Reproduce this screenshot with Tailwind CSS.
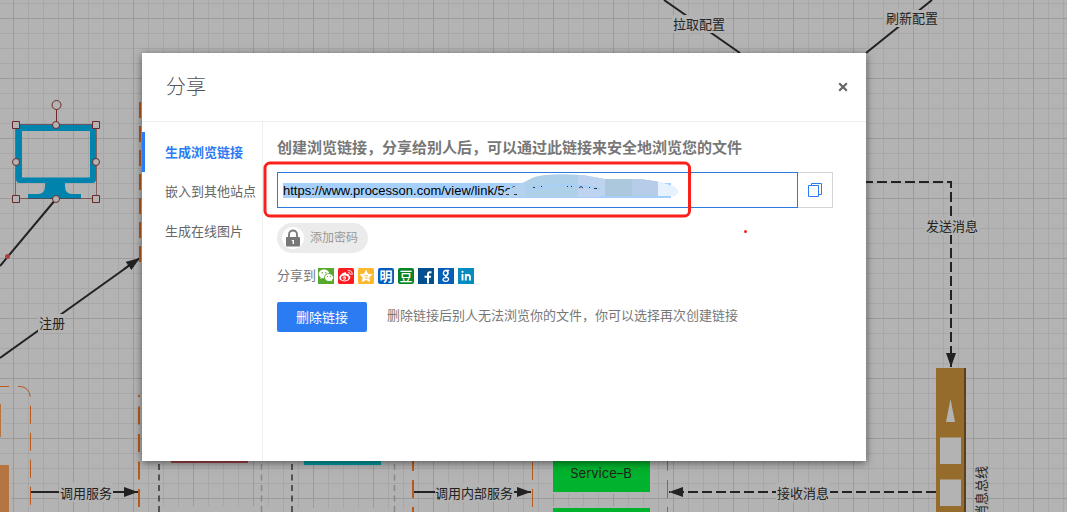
<!DOCTYPE html>
<html lang="zh-CN">
<head>
<meta charset="utf-8">
<meta name="viewport" content="width=device-width, initial-scale=1">
<title>分享</title>
<script src="https://cdn.jsdelivr.net/npm/@tailwindcss/browser@4"></script>
</head>
<body class="font-['Liberation_Sans','Noto_Sans_CJK_SC',sans-serif] text-[13px] text-[#666]">
<main class="relative min-h-screen overflow-hidden bg-[#b3b3b3]">
  <!-- Diagram canvas -->
  <svg class="absolute inset-0 h-full w-full text-[13px]" fill="none" aria-hidden="true">
    <defs>
      <pattern id="grid" x="13" y="18" width="60" height="60" patternUnits="userSpaceOnUse">
        <path d="M15.5 0V60M30.5 0V60M45.5 0V60M0 15.5H60M0 30.5H60M0 45.5H60" stroke="#a7a7a7"/>
        <path d="M.5 0V60M0 .5H60" stroke="#9b9b9b"/>
      </pattern>
      <marker id="arrow" viewBox="0 0 14 10" refX="14" refY="5" markerWidth="14" markerHeight="10" markerUnits="userSpaceOnUse" orient="auto-start-reverse"><path d="M0 0L14 5L0 10Z" fill="#222"/></marker>
    </defs>
    <rect width="100%" height="100%" fill="url(#grid)"/>
    <!-- Cleared interiors of nodes -->
    <g fill="#b3b3b3">
      <rect x="0" y="404" width="3" height="34"/><rect x="0" y="456" width="11" height="60"/>
      <rect x="159" y="506" width="120" height="10"/><rect x="292" y="508" width="120" height="10"/>
      <rect x="551" y="458" width="101" height="36"/><rect x="551" y="506" width="101" height="10"/>
    </g>
    <!-- Connectors -->
    <g stroke="#222" stroke-width="2">
      <path d="M664 0L740 53M932 0L866 53M56 199L0 266M0 358L130 265" />
      <path d="M124 269L140 258" marker-end="url(#arrow)"/>
      <path d="M31 492H138" marker-end="url(#arrow)"/>
      <path d="M414 492H531" marker-end="url(#arrow)"/>
      <path d="M866 182H951V367" stroke-dasharray="10 4" stroke-dashoffset="3" marker-end="url(#arrow)"/>
      <path d="M936 492H669" stroke-dasharray="10 4" marker-end="url(#arrow)"/>
    </g>
    <circle cx="7.500" cy="256.500" r="2.500" fill="#b04040"/>
    <!-- Orange containers -->
    <g stroke="#b75b1c">
      <path d="M0 386.500H20Q30.500 387 30.500 400V512" stroke-dasharray="18 9" stroke-dashoffset="9"/>
      <path d="M140 262V96" stroke-width="2" stroke-dasharray="16 8"/>
      <path d="M139 395V512" stroke-width="2" stroke-dasharray="18 9.500" stroke-dashoffset="16"/>
      <path d="M413 453V512" stroke-width="2" stroke-dasharray="18 9"/>
      <path d="M532.500 462V512M667.500 453V512" stroke-dasharray="18 9"/>
    </g>
    <path d="M159 464V512M292 464V512" stroke="#333" stroke-width="1.500" stroke-dasharray="6 4.500"/>
    <path d="M261.500 464V512M394.500 464V512" stroke="#888" stroke-width="1.500" stroke-dasharray="6 4.500"/>
    <path d="M0 404H1V437H0ZM0 465H9V512H0Z" fill="#b57542"/>
    <path d="M171 455H248V463H171Z" fill="#a34245"/>
    <path d="M304 455H381V465H304Z" fill="#009a9d"/>
    <path d="M553 440H650V492H553ZM553 508H650V520H553Z" fill="#00b22d"/>
    <!-- Monitor shape with selection handles -->
    <path fill-rule="evenodd" d="M16 124.500H96V179Q96 183 92 183H65V186Q65 194 72 194H81V199H28V194H38Q45 194 45 186V183H20Q16 183 16 179ZM22 131V177.500H90V131Z" fill="#0083ad"/>
    <g stroke="#6d2929">
      <rect x="15.500" y="124.500" width="81" height="74" stroke-opacity=".6"/>
      <path d="M56.500 109V122"/>
      <g fill="#b3b3b3">
        <path d="M12.500 121.500h7v7h-7zM92.500 121.500h7v7h-7zM12.500 195.500h7v7h-7zM92.500 195.500h7v7h-7z"/>
        <circle cx="56.500" cy="105" r="4.500"/><circle cx="56" cy="125" r="3.500"/><circle cx="16" cy="162" r="3.500"/><circle cx="96" cy="162" r="3.500"/><circle cx="56" cy="199" r="3.500"/>
      </g>
    </g>
    <!-- Message bus -->
    <path d="M936 368H964V512H936Z" fill="#966c2d"/><path d="M964 368H966V512H964Z" fill="#5a4020"/>
    <path d="M950.500 399L955 422H946ZM940 437.500H961V464H940ZM940 479.500H961V506H940Z" fill="#b3b3b3"/>
    <!-- Labels -->
    <g fill="#b3b3b3"><path d="M672 15H726V33H672ZM884 10H938V27H884ZM38 314H65V332H38ZM59 483H113V502H59ZM435 483H514V502H435ZM776 483H830V502H776ZM925 217H979V235H925Z"/></g>
    <g fill="#222" text-anchor="middle">
      <text x="699" y="29">拉取配置</text><text x="912" y="23">刷新配置</text>
      <text x="52" y="328">注册</text><text x="86" y="498">调用服务</text>
      <text x="474" y="498">调用内部服务</text><text x="803" y="498">接收消息</text><text x="952" y="231">发送消息</text>
      <text x="601" y="478" class="font-['Inter']">Service–B</text>
      <text transform="translate(986 466) rotate(-90)" text-anchor="end">消息总线</text>
    </g>
  </svg>

  <!-- Share dialog -->
  <div class="relative pt-[53px] pr-[201px] pb-[51px] pl-[142px]">
    <section role="dialog" aria-labelledby="title" class="flex min-h-[408px] flex-col bg-white shadow-[0_2px_8px_rgba(0,0,0,0.5)]">
      <header class="flex h-[69px] items-center justify-between border-b border-[#eee] px-6">
        <h1 id="title" class="text-[20px] font-light text-[#555]">分享</h1>
        <button type="button" aria-label="关闭" class="-mr-[11px] flex size-5 items-center justify-center text-[#666]">
          <svg class="size-[10px]" viewBox="0 0 10 10" stroke="currentColor" stroke-width="2.200" fill="none"><path d="M1.200 1.200L8.800 8.800M8.800 1.200L1.200 8.800"/></svg>
        </button>
      </header>
      <div class="flex grow">
        <nav class="w-[121px] shrink-0 border-r border-[#eee] pt-[10px] whitespace-nowrap">
          <a href="#link" class="flex h-10 items-center border-l-[3px] border-[#2b7bf3] pt-[2px] pl-5 font-bold text-[#2b7bf3]">生成浏览链接</a>
          <a href="#embed" class="flex h-10 items-center border-l-[3px] border-transparent pl-5">嵌入到其他站点</a>
          <a href="#image" class="flex h-10 items-center border-l-[3px] border-transparent pl-5">生成在线图片</a>
        </nav>
        <div class="relative min-w-0 grow pt-[14px] pr-[33px] pl-[14px]">
          <label for="url" class="block h-6 text-[15px] leading-6 font-bold text-[#777]">创建浏览链接，分享给别人后，可以通过此链接来安全地浏览您的文件</label>
          <div class="relative mt-3 flex">
            <input id="url" type="text" value="https://www.processon.com/view/link/5c8" class="h-9 min-w-0 grow border border-[#2b7bdf] bg-[linear-gradient(#a6d0fb,#a6d0fb)] bg-[length:388px_15px] bg-[position:5px_10px] bg-no-repeat px-[5px] text-[13px] text-black outline-none">
            <button type="button" aria-label="复制链接" class="flex h-9 w-[35px] items-center justify-center border border-l-0 border-[#d5d5d5]">
              <svg class="size-[14px]" viewBox="0 0 14 14" fill="none" stroke="#2b7bf3"><path d="M.5 2.500H10.500V13.500H.5ZM3.500 2.500V.5H13.500V11.500H10.500"/></svg>
            </button>
            <!-- Brushed-over part of the address and the red annotation frame -->
            <svg class="pointer-events-none absolute -top-[12px] -left-[14px] h-[56px] w-[427px]" viewBox="263 160 427 56" fill="none" overflow="visible" aria-hidden="true">
              <clipPath id="brush"><path d="M503 193C512 187 522 184 532 178C544 173 576 174 588 176L605 179H640C656 181 666 183 674 187Q682 192 673 196H600V197H512Q503 196 503 193Z"/></clipPath>
              <g clip-path="url(#brush)">
                <path d="M500 170H700V200H500Z" fill="#afd0e9"/><path d="M500 170H525V200H500Z" fill="#b3d2ef"/>
                <path d="M578 170H605V200H578Z" fill="#bdd3f0"/><path d="M605 170H632V200H605Z" fill="#acc8dc"/><path d="M632 170H658V200H632Z" fill="#b6cde9"/><path d="M658 170H690V200H658Z" fill="#e6f2fe"/>
                <path d="M530 190C545 184 580 184 600 189" stroke="#a6d0fb" stroke-width="2"/>
              </g>
              <path d="M506 194.500h3M514 194.500h3M533 187.500h2M541 186.500h1M567 186.500h1M571 186.500h1M579 188Q581 185 583 188M589 187.500h1M594 188.500h3" stroke="#333"/>
              <rect x="265" y="163" width="424.500" height="53" rx="5" stroke="#fb211b" stroke-width="3"/>
            </svg>
          </div>
          <button type="button" class="mt-[15px] flex h-[30px] items-center gap-[6px] rounded-full bg-[#ebebeb] pr-[10px] pl-[5px] text-[12px] text-[#999]">
            <svg class="size-[22px]" viewBox="0 0 22 22"><circle cx="11" cy="11" r="11" fill="#fff"/><path d="M7 11V7.500a4 4 0 0 1 8 0V11" fill="none" stroke="#777" stroke-width="1.800"/><rect x="4" y="10" width="14" height="9.500" rx="1" fill="#777"/><path d="M9.800 13H12V17H10.600V14H9.800Z" fill="#fff"/></svg>
            添加密码
          </button>
          <div class="mt-[13px] flex h-5 items-center gap-1 whitespace-nowrap">
            <span class="-mr-[2px] text-[#777]">分享到</span>
            <a href="#wechat" aria-label="微信"><svg class="size-4" viewBox="0 0 16 16"><path fill="#55a92d" d="M0 0h16v16H0z"/><path fill="#fff" d="M6 1.500C3 1.500.7 3.400.7 5.900c0 1.400.8 2.600 2 3.400L2.200 11l2-1c.6.2 1.200.3 2 .3-.6-3 2-5.300 5.200-5.100C10.900 3 8.700 1.500 6 1.500ZM10.800 6C8.500 6 6.800 7.600 6.800 9.500S8.500 13 10.800 13c.5 0 1-.1 1.500-.3l1.700.9-.4-1.500c1-.6 1.600-1.500 1.600-2.600 0-1.900-2-3.500-4.400-3.500Z"/><g fill="#55a92d"><circle cx="4.300" cy="4.700" r=".7"/><circle cx="7.800" cy="4.700" r=".7"/><circle cx="9.500" cy="8.500" r=".6"/><circle cx="12.400" cy="8.500" r=".6"/></g></svg></a>
            <a href="#weibo" aria-label="微博"><svg class="size-4" viewBox="0 0 16 16"><rect width="16" height="16" rx="1.500" fill="#fb1c22"/><path fill="#fff" d="M6.500 4.500c1-.4 2 0 1.700 1.600 2-.7 3 .1 2.500 1.500 1.300.4 1.600 1.100 1.600 1.900 0 2-2.600 3.900-5.800 3.900-3 0-5.200-1.500-5.200-3.600 0-1.900 2.700-4.600 5.200-5.300Z"/><ellipse cx="6.700" cy="9.900" rx="3.700" ry="2.500" fill="#fb1c22"/><circle cx="6.400" cy="10" r="1.700" fill="#fff"/><circle cx="6" cy="10.300" r=".7" fill="#fb1c22"/><path d="M9.800 2.800C12.500 2 14.800 4 13.900 7M10.200 4.700c1.500-.3 2.400.6 2 2" stroke="#fff" fill="none"/></svg></a>
            <a href="#qzone" aria-label="QQ空间"><svg class="size-4" viewBox="0 0 16 16"><rect width="16" height="16" rx="1.500" fill="#fcb92d"/><path fill="#fff" d="M8 1.500l2 4.200 4.600.6-3.300 3.200.8 4.600L8 12l-4.100 2.100.8-4.600L1.400 6.300 6 5.700Z"/><path d="M6 7.500h3.800L7 10.200h3.600" fill="none" stroke="#fcb92d" stroke-width=".7"/></svg></a>
            <a href="#mingdao" class="flex size-4 items-center justify-center rounded-[2px] bg-[#055cbd] text-[13px] leading-none font-bold text-white">明</a>
            <a href="#douban" class="flex size-4 items-center justify-center rounded-[2px] bg-[#078421] text-[13px] leading-none font-medium text-white">豆</a>
            <a href="#facebook" aria-label="Facebook"><svg class="size-4" viewBox="0 0 16 16"><path fill="#04508e" d="M0 0h16v16H0z"/><path d="M13.500 4.300H12Q10 4.300 10 6.300V15.500M6.500 8.700H13" fill="none" stroke="#fff" stroke-width="2"/></svg></a>
            <a href="#google" aria-label="Google"><svg class="size-4" viewBox="0 0 16 16"><path fill="#0560b5" d="M0 0h16v16H0z"/><g fill="none" stroke="#fff" stroke-width="1.300"><ellipse cx="7.700" cy="5" rx="2.300" ry="2.500"/><path d="M8 2.500H11.200M9.200 3Q10.500 5 9.200 6.700L7.800 8Q7.500 8.700 8.700 9.200Q11 10.300 10.500 11.700Q9.800 13.500 7.500 13.300Q4.800 13 5 11.300Q5.500 9.500 8.700 9.600"/></g></svg></a>
            <a href="#linkedin" aria-label="LinkedIn"><svg class="size-4" viewBox="0 0 16 16"><path fill="#058bc0" d="M0 0h16v16H0z"/><path d="M4.500 6V12.500M7.800 6V12.500M7.800 9Q8 7 10 7Q12 7 12 9V12.500" fill="none" stroke="#fff" stroke-width="1.900"/><circle cx="4.500" cy="3.800" r="1.100" fill="#fff"/></svg></a>
          </div>
          <div class="mt-4 flex items-center gap-5">
            <button type="button" class="h-[30px] w-[90px] shrink-0 rounded-[2px] bg-[#2b7bf3] pt-[2px] text-white">删除链接</button>
            <p class="pb-[2px] text-[#777]">删除链接后别人无法浏览你的文件，你可以选择再次创建链接</p>
          </div>
          <span class="absolute top-[108px] right-[119px] size-[3px] rounded-full bg-[#f02222]"></span>
        </div>
      </div>
    </section>
  </div>
</main>
</body>
</html>
